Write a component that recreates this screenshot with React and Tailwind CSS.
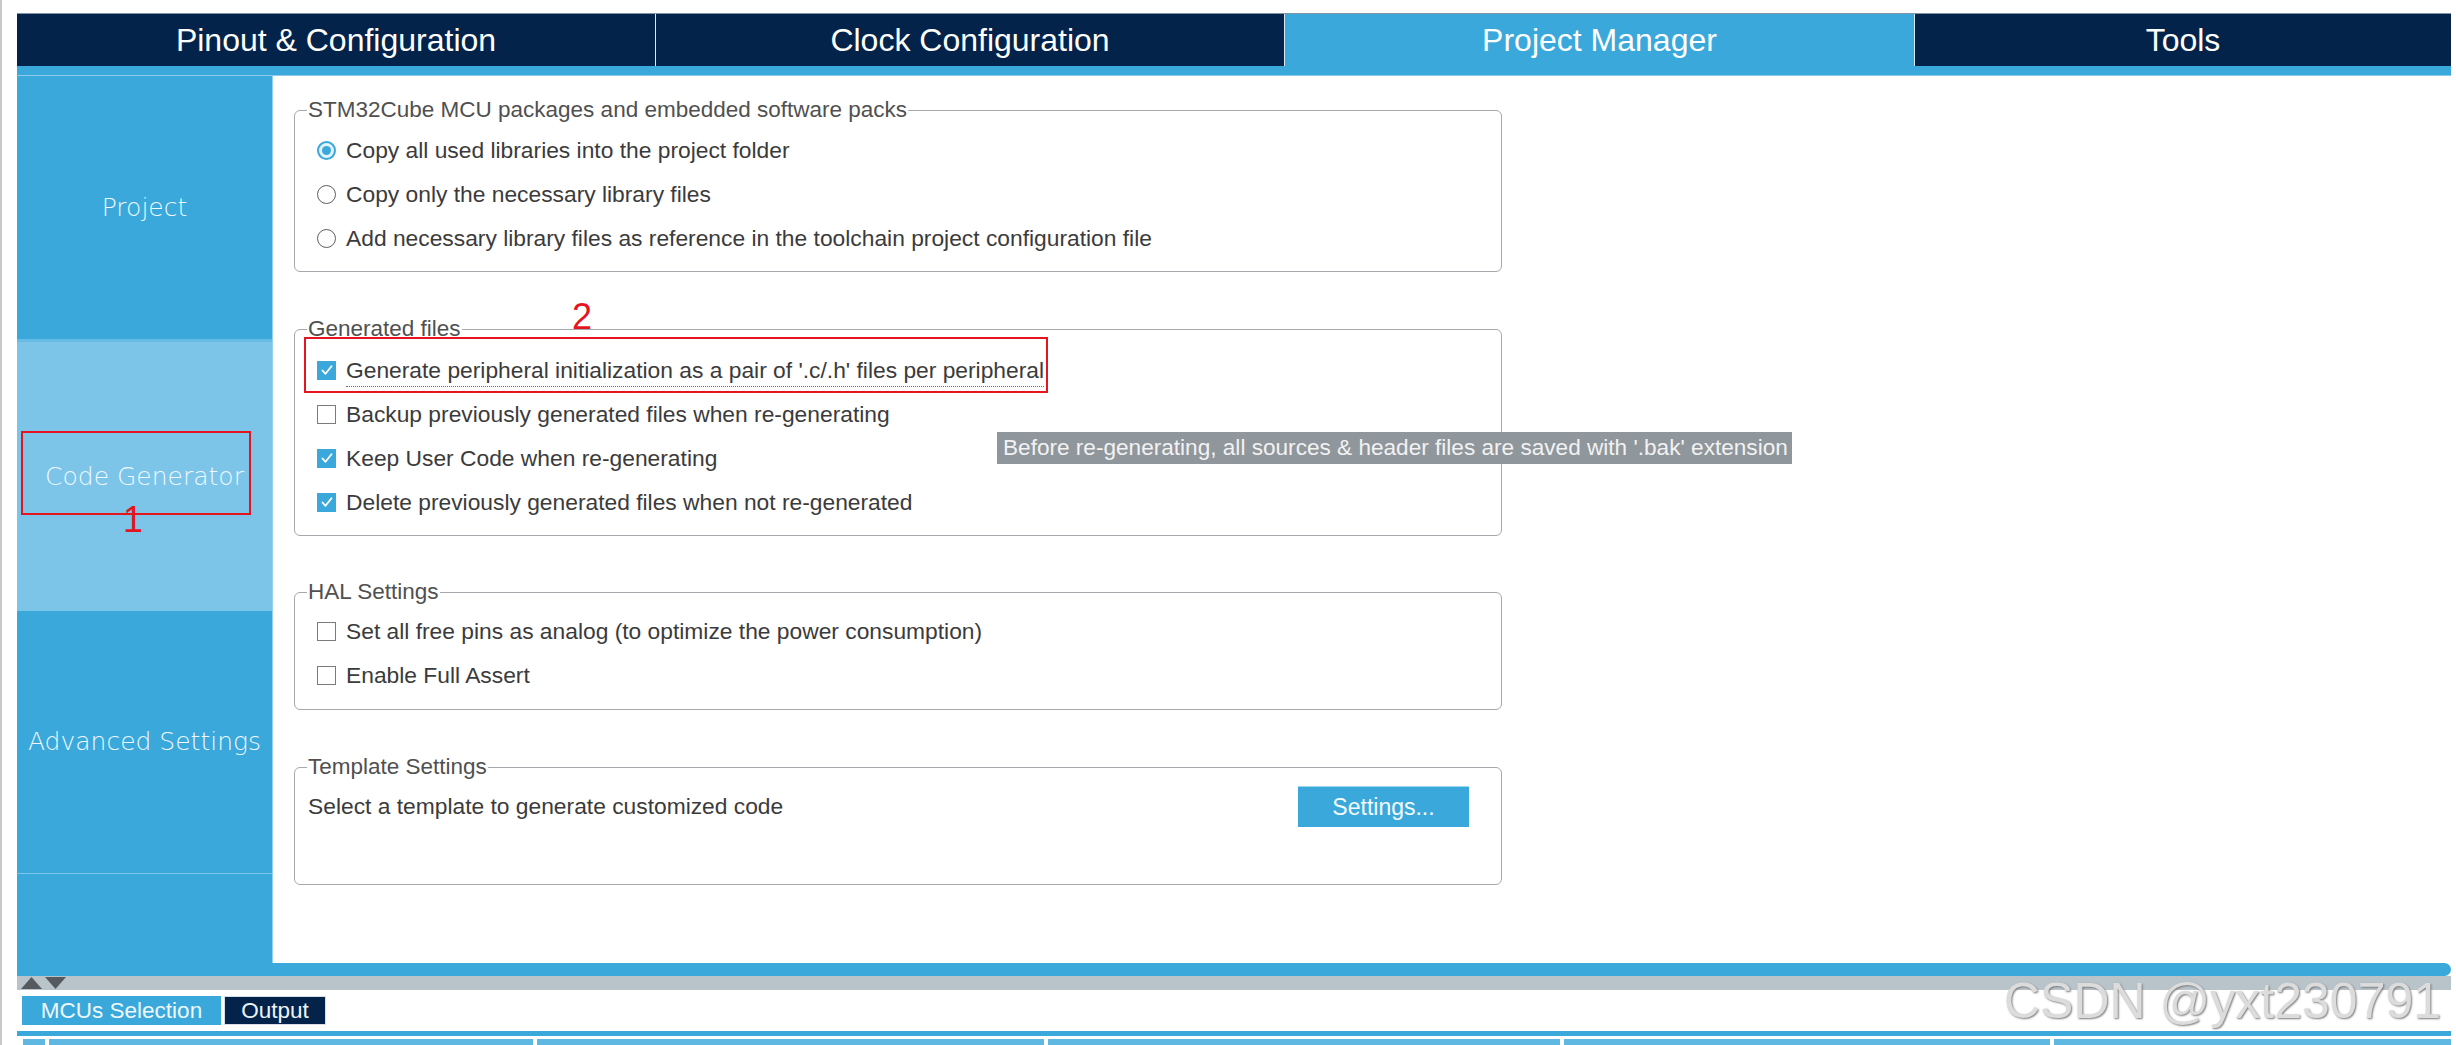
import React from "react";

const TABS = [
  { label: "Pinout & Configuration", width: "w-[638px]", active: false },
  { label: "Clock Configuration", width: "w-[629px]", active: false },
  { label: "Project Manager", width: "w-[630px]", active: true },
  { label: "Tools", width: "w-[537px]", active: false },
];

function CheckBox({ checked }) {
  if (checked) {
    return (
      <span className="flex h-[19px] w-[19px] shrink-0 items-center justify-center bg-[#3aa8db]">
        <svg width="14" height="14" viewBox="0 0 14 14" fill="none">
          <path d="M2.5 7.5 L5.5 10.8 L11.5 3.2" stroke="white" strokeWidth="1.8" strokeLinecap="round" strokeLinejoin="round" />
        </svg>
      </span>
    );
  }
  return <span className="h-[19px] w-[19px] shrink-0 border border-[#7b7b7b] bg-white" />;
}

function Radio({ checked }) {
  if (checked) {
    return (
      <span className="flex h-[19px] w-[19px] shrink-0 items-center justify-center rounded-full border-2 border-[#3aa8db] bg-[#e3f3fb]">
        <span className="h-[9px] w-[9px] rounded-full bg-[#3aa8db]" />
      </span>
    );
  }
  return <span className="h-[19px] w-[19px] shrink-0 rounded-full border-[1.5px] border-[#5e5e5e] bg-white" />;
}

function Group({ title, className, children }) {
  return (
    <fieldset className={"w-[1208px] rounded-[6px] border border-[#a5a9ad] px-[12px] " + className}>
      <legend className="px-[1px] text-[22.5px] leading-[24px] text-[#505050]">{title}</legend>
      {children}
    </fieldset>
  );
}

function OptionRow({ control, children }) {
  return (
    <div className="flex h-[44px] items-center gap-[10px] pl-[10px]">
      {control}
      <span>{children}</span>
    </div>
  );
}

function SideItem({ label, className }) {
  return (
    <div className={"flex items-center justify-center text-[25px] text-[#eef8fd] " + className}>
      {label}
    </div>
  );
}

export default function App() {
  return (
    <div className="relative h-[1045px] w-[2456px] overflow-hidden border-l-2 border-[#c9c9c9] bg-white pl-[15px] pt-[13px] font-['Liberation_Sans',Arial,sans-serif] text-[22.8px] text-[#3b3b3b]">
      {/* top tabs */}
      <div className="flex h-[53px] w-[2434px] border-t border-[#8494a8]">
        {TABS.map((tab, i) => (
          <div
            key={tab.label}
            className={
              tab.width +
              " flex items-center justify-center text-[32px] text-white " +
              (tab.active ? "bg-[#3aa8db]" : "bg-[#03234b]") +
              (i > 0 ? " border-l border-[#dfe6ee]" : "")
            }
          >
            {tab.label}
          </div>
        ))}
      </div>
      <div className="h-[10px] w-[2434px] border-b border-[#8ccbea] bg-[#3aa8db]" />

      {/* main */}
      <div className="flex h-[887px] w-[2434px]">
        <div className="flex w-[256px] flex-col border-r border-[#95d1ee] bg-[#3aa8db] font-['DejaVu_Sans',sans-serif] font-light">
          <SideItem label="Project" className="h-[266px] border-b-[3px] border-[#66bce5]" />
          <SideItem label="Code Generator" className="h-[269px] bg-[#7cc5e9]" />
          <SideItem label="Advanced Settings" className="h-[263px] border-b border-[#7cc5e9]" />
          <div className="flex-1" />
        </div>

        <div className="flex-1 bg-white pl-[21px] pt-[22px]">
          <Group title="STM32Cube MCU packages and embedded software packs" className="pb-[11px] pt-[6px]">
            <OptionRow control={<Radio checked />}>Copy all used libraries into the project folder</OptionRow>
            <OptionRow control={<Radio />}>Copy only the necessary library files</OptionRow>
            <OptionRow control={<Radio />}>Add necessary library files as reference in the toolchain project configuration file</OptionRow>
          </Group>

          <Group title="Generated files" className="mt-[45px] pb-[11px] pt-[7px]">
            <OptionRow control={<CheckBox checked />}>
              <span className="border-b border-dotted border-[#6a6a6a] pb-[3px]">
                Generate peripheral initialization as a pair of '.c/.h' files per peripheral
              </span>
            </OptionRow>
            <OptionRow control={<CheckBox />}>Backup previously generated files when re-generating</OptionRow>
            <OptionRow control={<CheckBox checked />}>Keep User Code when re-generating</OptionRow>
            <OptionRow control={<CheckBox checked />}>Delete previously generated files when not re-generated</OptionRow>
          </Group>

          <Group title="HAL Settings" className="mt-[44px] pb-[12px] pt-[5px]">
            <OptionRow control={<CheckBox />}>Set all free pins as analog (to optimize the power consumption)</OptionRow>
            <OptionRow control={<CheckBox />}>Enable Full Assert</OptionRow>
          </Group>

          <Group title="Template Settings" className="mt-[45px]">
            <div className="h-[105px]">
              <div className="flex h-[55px] items-center justify-between pl-[1px] pr-[20px]">
                <span>Select a template to generate customized code</span>
                <button
                  type="button"
                  className="h-[41px] w-[171px] border-t border-[#9dd6f1] bg-[#3aa8db] text-[23px] text-[#f4fbff]"
                >
                  Settings...
                </button>
              </div>
            </div>
          </Group>
        </div>
      </div>

      {/* bottom splitter and output tabs */}
      <div className="h-[13px] w-[2434px] rounded-r-full bg-[#3aa8db]" />
      <div className="flex h-[14px] w-[2434px] items-center gap-[3px] bg-[#b8c3ca] pl-[4px]">
        <svg width="21" height="12" viewBox="0 0 21 12">
          <path d="M0 12 L10.5 0 L21 12 Z" fill="#555a5e" />
        </svg>
        <svg width="21" height="12" viewBox="0 0 21 12">
          <path d="M0 0 L21 0 L10.5 12 Z" fill="#555a5e" />
        </svg>
      </div>
      <div className="flex h-[35px] gap-[3px] pl-[5px] pt-[6px]">
        <div className="flex w-[199px] items-center justify-center bg-[#3aa8db] text-[22.5px] text-[#eef8fd]">
          MCUs Selection
        </div>
        <div className="flex w-[102px] items-center justify-center border border-[#d8dee5] bg-[#03234b] text-[22.5px] text-[#eef3f8]">
          Output
        </div>
      </div>
      <div className="mt-[6px] h-[5px] w-[2434px] bg-[#3aa8db]" />
      <div className="mt-[3px] flex h-[10px] w-[2434px] gap-[4px] pl-[6px]">
        <div className="w-[22px] bg-[#5fb8e2]" />
        <div className="w-[484px] bg-[#5fb8e2]" />
        <div className="w-[507px] bg-[#5fb8e2]" />
        <div className="w-[512px] bg-[#5fb8e2]" />
        <div className="w-[486px] bg-[#5fb8e2]" />
        <div className="flex-1 bg-[#5fb8e2]" />
      </div>

      {/* overlays: annotations, tooltip, watermark */}
      <div className="absolute left-[19px] top-[431px] h-[84px] w-[230px] border-2 border-[#e6141f]" />
      <div className="absolute left-[121px] top-[502px] text-[36px] leading-none text-[#e6141f]">1</div>
      <div className="absolute left-[302px] top-[337px] h-[56px] w-[744px] border-2 border-[#e6141f]" />
      <div className="absolute left-[570px] top-[299px] text-[36px] leading-none text-[#e6141f]">2</div>
      <div className="absolute left-[995px] top-[432px] h-[32px] w-[795px] bg-[#8f969c] pl-[6px] text-[22.6px] leading-[32px] text-[#f2f2f2]">
        Before re-generating, all sources &amp; header files are saved with '.bak' extension
      </div>
      <div className="absolute left-[2002px] top-[976px] text-[50px] leading-none text-[#dcdcdc] [text-shadow:1px_1px_2px_#7a7a7a]">
        CSDN @yxt230791
      </div>
    </div>
  );
}
